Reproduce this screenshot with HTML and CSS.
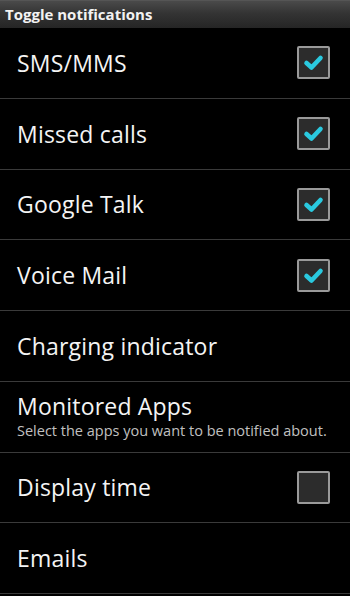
FILE: index.html
```html
<!DOCTYPE html>
<html>
<head>
<meta charset="utf-8">
<link rel="stylesheet" href="styles.css">
</head>
<body>
<div class="header">Toggle notifications</div>
<ul class="list">
  <li class="row"><span class="title">SMS/MMS</span><span class="cb on"><svg viewBox="0 0 29 29"><path d="M7.5 15 L12.5 19.5 L21.5 10" /></svg></span></li>
  <li class="row"><span class="title">Missed calls</span><span class="cb on"><svg viewBox="0 0 29 29"><path d="M7.5 15 L12.5 19.5 L21.5 10" /></svg></span></li>
  <li class="row"><span class="title">Google Talk</span><span class="cb on"><svg viewBox="0 0 29 29"><path d="M7.5 15 L12.5 19.5 L21.5 10" /></svg></span></li>
  <li class="row"><span class="title">Voice Mail</span><span class="cb on"><svg viewBox="0 0 29 29"><path d="M7.5 15 L12.5 19.5 L21.5 10" /></svg></span></li>
  <li class="row"><span class="title">Charging indicator</span></li>
  <li class="row"><div class="texts"><span class="title">Monitored Apps</span><span class="sub">Select the apps you want to be notified about.</span></div></li>
  <li class="row"><span class="title">Display time</span><span class="cb"></span></li>
  <li class="row"><span class="title">Emails</span></li>
</ul>
</body>
</html>
```

FILE: styles.css
```css
html, body {
  margin: 0;
  padding: 0;
  background: #000;
  width: 350px;
  height: 596px;
  overflow: hidden;
  font-family: "Open Sans", "Noto Sans", "DejaVu Sans", sans-serif;
}
.header {
  height: 28px;
  box-sizing: border-box;
  padding-left: 5px;
  line-height: 27px;
  font-weight: bold;
  font-size: 15px;
  color: #f2f2f2;
  background: linear-gradient(#4a4a4a, #343434 45%, #252525);
  border-top: 1px solid #555;
}
.list {
  list-style: none;
  margin: 0;
  padding: 0;
}
.row {
  height: 69.75px;
  border-bottom: 1px solid #3a3a3a;
  display: flex;
  align-items: center;
  justify-content: space-between;
  padding: 0 20px 0 17px;
}
.title {
  color: #f4f4f4;
  font-size: 23px;
  letter-spacing: 0.2px;
}
.texts {
  display: flex;
  flex-direction: column;
  margin-top: -2px;
}
.texts .title {
  line-height: 30px;
}
.sub {
  color: #c0c0c0;
  font-size: 14.5px;
  line-height: 19px;
}
.cb {
  width: 33px;
  height: 33px;
  box-sizing: border-box;
  border: 2px solid #9a9a9a;
  border-radius: 2px;
  background: #2c2c2c;
  display: block;
}
.cb svg {
  display: block;
  width: 29px;
  height: 29px;
}
.cb path {
  fill: none;
  stroke: #2ac9df;
  stroke-width: 4.6;
  stroke-linecap: round;
  stroke-linejoin: round;
}
```
